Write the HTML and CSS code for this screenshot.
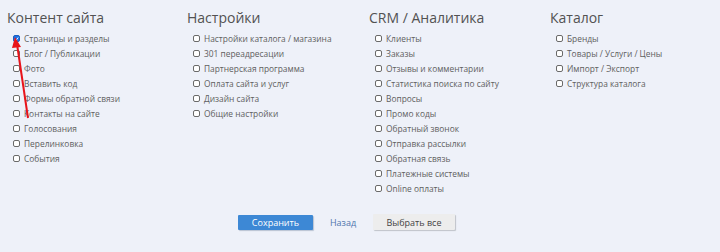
FILE: index.html
```html
<!DOCTYPE html>
<html>
<head>
    <meta charset="utf-8">
    <title>Права доступа</title>
    <link rel="stylesheet" href="styles.css">
</head>
<body>
    <div class="page">
        <div class="groups">
            <div class="group">
                <h3>Контент сайта</h3>
                <label class="item"><span class="box checked"><svg width="6" height="6" viewBox="0 0 6 6"><path d="M1 3 L2.5 4.5 L5 1.2" fill="none" stroke="#fff" stroke-width="1.2"/></svg></span> Страницы и разделы</label>
                <label class="item"><span class="box"></span> Блог / Публикации</label>
                <label class="item"><span class="box"></span> Фото</label>
                <label class="item"><span class="box"></span> Вставить код</label>
                <label class="item"><span class="box"></span> Формы обратной связи</label>
                <label class="item"><span class="box"></span> Контакты на сайте</label>
                <label class="item"><span class="box"></span> Голосования</label>
                <label class="item"><span class="box"></span> Перелинковка</label>
                <label class="item"><span class="box"></span> События</label>
            </div>
            <div class="group">
                <h3>Настройки</h3>
                <label class="item"><span class="box"></span> Настройки каталога / магазина</label>
                <label class="item"><span class="box"></span> 301 переадресации</label>
                <label class="item"><span class="box"></span> Партнерская программа</label>
                <label class="item"><span class="box"></span> Оплата сайта и услуг</label>
                <label class="item"><span class="box"></span> Дизайн сайта</label>
                <label class="item"><span class="box"></span> Общие настройки</label>
            </div>
            <div class="group">
                <h3>CRM / Аналитика</h3>
                <label class="item"><span class="box"></span> Клиенты</label>
                <label class="item"><span class="box"></span> Заказы</label>
                <label class="item"><span class="box"></span> Отзывы и комментарии</label>
                <label class="item"><span class="box"></span> Статистика поиска по сайту</label>
                <label class="item"><span class="box"></span> Вопросы</label>
                <label class="item"><span class="box"></span> Промо коды</label>
                <label class="item"><span class="box"></span> Обратный звонок</label>
                <label class="item"><span class="box"></span> Отправка рассылки</label>
                <label class="item"><span class="box"></span> Обратная связь</label>
                <label class="item"><span class="box"></span> Платежные системы</label>
                <label class="item"><span class="box"></span> Online оплаты</label>
            </div>
            <div class="group">
                <h3>Каталог</h3>
                <label class="item"><span class="box"></span> Бренды</label>
                <label class="item"><span class="box"></span> Товары / Услуги / Цены</label>
                <label class="item"><span class="box"></span> Импорт / Экспорт</label>
                <label class="item"><span class="box"></span> Структура каталога</label>
            </div>
        </div>

        <div class="actions">
            <button class="btn btn-save">Сохранить</button>
            <a class="back" href="#">Назад</a>
            <button class="btn btn-all">Выбрать все</button>
        </div>

        <!-- annotation arrow -->
        <svg class="arrow" width="40" height="90" viewBox="0 0 40 90">
            <line x1="22" y1="86" x2="11" y2="12" stroke="#e8141b" stroke-width="2"/>
            <polygon points="9,5 6,16 15,15" fill="#e8141b"/>
        </svg>
    </div>
</body>
</html>
```

FILE: styles.css
```css
html, body {
    margin: 0;
    padding: 0;
    background: #eef1f9;
}
body {
    font-family: "Open Sans", Arial, sans-serif;
    color: #555;
}
.page {
    position: relative;
    width: 720px;
    height: 252px;
    padding: 8px 0 0 7px;
    box-sizing: border-box;
}
.groups {
    display: grid;
    grid-template-columns: 180px 182px 181px 170px;
}
.group h3 {
    margin: 0 0 3px 0;
    font-size: 14px;
    font-weight: normal;
    line-height: 20px;
    color: #525252;
}
.item {
    display: flex;
    align-items: center;
    height: 15px;
    padding-left: 6px;
    font-size: 8.4px;
    color: #606060;
}
.box {
    display: flex;
    align-items: center;
    justify-content: center;
    width: 7px;
    height: 7px;
    margin-right: 4px;
    border: 1px solid #6a6a6a;
    border-radius: 2px;
    background: #fff;
    box-sizing: border-box;
}
.box.checked {
    background: #1a73e8;
    border-color: #1a5fc0;
}
.actions {
    position: absolute;
    left: 238px;
    top: 214px;
    display: flex;
    align-items: center;
}
.btn {
    font-family: "Open Sans", Arial, sans-serif;
    font-size: 9px;
    height: 15px;
    padding: 0;
    border: none;
    border-radius: 1px;
    cursor: pointer;
}
.btn-save {
    width: 75px;
    background: #3d88d5;
    color: #fff;
    box-shadow: 1px 1px 1px #b8c2d2;
}
.back {
    width: 60px;
    text-align: center;
    font-size: 9px;
    color: #4f76ad;
    text-decoration: none;
}
.btn-all {
    width: 82px;
    height: 16px;
    background: #ededed;
    color: #444;
    box-shadow: 1px 1px 1px #bfc3c9;
}
.arrow {
    position: absolute;
    left: 6px;
    top: 32px;
}
```
